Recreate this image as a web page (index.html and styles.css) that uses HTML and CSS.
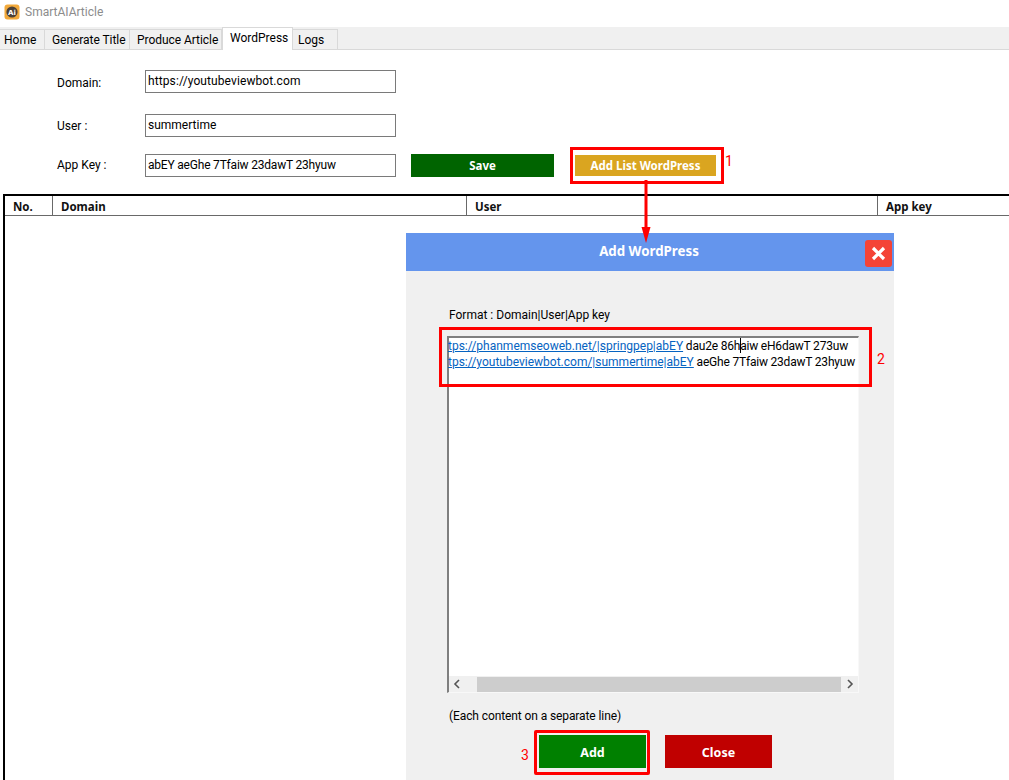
FILE: index.html
```html
<!DOCTYPE html>
<html lang="en">
<head>
<meta charset="utf-8">
<title>SmartAIArticle</title>
<link rel="stylesheet" href="styles.css">
</head>
<body>
<div class="app">
  <header class="titlebar">
    <svg class="logo" width="16" height="16" viewBox="0 0 16 16"><rect x="0.5" y="0.5" width="15" height="15" rx="3" fill="#f2a93b"/><circle cx="8" cy="8" r="5.6" fill="#4a4038"/><text x="8" y="10.5" text-anchor="middle" class="logo-text">Ai</text></svg>
    <span class="app-name">SmartAIArticle</span>
  </header>
  <nav class="tabs">
    <span class="tab t1">Home</span>
    <span class="tab t2">Generate Title</span>
    <span class="tab t3">Produce Article</span>
    <span class="tab active">WordPress</span>
    <span class="tab t5">Logs</span>
  </nav>
  <section class="form">
    <div class="row r1"><label class="lbl">Domain:</label><div class="field">https://youtubeviewbot.com</div></div>
    <div class="row r2"><label class="lbl">User :</label><div class="field">summertime</div></div>
    <div class="row r3"><label class="lbl">App Key :</label><div class="field">abEY aeGhe 7Tfaiw 23dawT 23hyuw</div>
      <button class="btn save">Save</button>
      <button class="btn gold">Add List WordPress</button>
    </div>
  </section>
  <section class="table">
    <div class="th c1">No.</div><div class="th c2">Domain</div><div class="th c3">User</div><div class="th c4">App key</div>
  </section>
</div>

<aside class="modal">
  <div class="modal-head"><span class="modal-title">Add WordPress</span>
    <span class="modal-close"><svg width="15" height="15" viewBox="0 0 15 15"><path d="M2 2 L13 13 M13 2 L2 13" stroke="#fff" stroke-width="3.2" fill="none"/></svg></span>
  </div>
  <div class="modal-body">
    <p class="format">Format : Domain|User|App key</p>
    <div class="textarea">
      <div class="lines">
        <div class="line"><a class="link">tps://phanmemseoweb.net/|springpep|abEY</a> dau2e 86h<span class="caret"></span>aiw eH6dawT 273uw</div>
        <div class="line"><a class="link">tps://youtubeviewbot.com/|summertime|abEY</a> aeGhe 7Tfaiw 23dawT 23hyuw</div>
      </div>
      <div class="hscroll">
        <svg class="arrow" width="8" height="10" viewBox="0 0 8 10"><path d="M6 1 L2 5 L6 9" fill="none" stroke="#555" stroke-width="1.6"/></svg>
        <div class="thumb"></div>
        <svg class="arrow" width="8" height="10" viewBox="0 0 8 10"><path d="M2 1 L6 5 L2 9" fill="none" stroke="#555" stroke-width="1.6"/></svg>
      </div>
    </div>
    <p class="note">(Each content on a separate line)</p>
    <div class="actions">
      <button class="btn add">Add</button>
      <button class="btn close">Close</button>
    </div>
  </div>
</aside>

<div class="mark m1"></div>
<div class="mark m2"></div>
<div class="mark m3"></div>
<span class="num n1">1</span>
<span class="num n2">2</span>
<span class="num n3">3</span>
<svg class="flow-arrow" width="14" height="64" viewBox="0 0 14 64"><path d="M7 0 V50" stroke="#f00" stroke-width="3"/><path d="M2.500 47 H11.500 L7 63 Z" fill="#f00"/></svg>
</body>
</html>
```
FILE: styles.css
```css
* { box-sizing: border-box; }
html, body { margin: 0; padding: 0; }
body { width: 1009px; height: 780px; overflow: hidden; position: relative; background: #fff; font-family: Roboto, "Noto Sans", sans-serif; font-size: 12px; color: #000; }
.app { display: flex; flex-direction: column; height: 780px; }

.titlebar { height: 27px; display: flex; align-items: center; gap: 5px; padding: 0 0 3px 4px; }
.logo-text { font: bold 7px "DejaVu Sans", sans-serif; fill: #fff; }
.app-name { color: #8c8c8c; font-size: 12px; }

.tabs { height: 23px; background: #f0f0f0; border-bottom: 1px solid #d9d9d9; display: flex; align-items: flex-end; white-space: nowrap; }
.tab { height: 21px; border: 1px solid #d9d9d9; border-bottom: 0; border-left: 0; line-height: 21px; padding-left: 4px; font-size: 12px; margin-bottom: -1px; }
.t1 { width: 45px; }
.t2 { width: 85px; padding-left: 7px; letter-spacing: -0.05px; }
.t3 { width: 92px; padding-left: 7px; letter-spacing: -0.05px; }
.active { width: 71px; height: 23px; background: #fff; border: 1px solid #d9d9d9; border-bottom: 0; line-height: 20px; padding-left: 7px; }
.t5 { width: 45px; padding-left: 5px; }

.form { padding: 20px 0 0 57px; display: flex; flex-direction: column; }
.row { display: flex; align-items: center; height: 23px; }
.r2 { margin-top: 21px; }
.r3 { margin-top: 17px; }
.lbl { width: 88px; font-size: 12px; position: relative; top: 1px; }
.r2 .lbl { top: 0; }
.r3 .lbl { top: -1px; }
.field { width: 251px; height: 23px; border: 1px solid #7a7a7a; padding-left: 2px; line-height: 20px; font-size: 12px; }
.r1 .field { letter-spacing: 0.1px; }
.r3 .field { letter-spacing: -0.2px; }

.btn { border: 0; padding: 0; color: #fff; font: bold 11.500px "Noto Sans", sans-serif; }
.save { width: 143px; height: 23px; margin-left: 15px; background: #006400; }
.gold { width: 141px; height: 21px; margin-left: 21px; background: #daa520; }

.table { margin: 17px 0 0 3px; height: 586px; border: 2px solid #000; border-width: 2px 0 0 2px; display: grid; grid-template-columns: 48px 414px 411px 1fr; grid-template-rows: 20px; }
.th { border-bottom: 1px solid #696969; border-right: 1px solid #696969; font: bold 11.500px/21px "Noto Sans", sans-serif; padding-left: 8px; color: #111; }
.c4 { border-right: 0; }

.modal { position: absolute; left: 406px; top: 233px; width: 488px; height: 547px; background: #f0f0f0; }
.modal-head { height: 38px; background: #6495ed; position: relative; display: flex; align-items: center; justify-content: center; padding: 0 2px 2px 0; }
.modal-title { color: #fff; font: bold 13.300px "Noto Sans", sans-serif; }
.modal-close { position: absolute; left: 459px; top: 7px; width: 27px; height: 27px; background: #f44336; border-radius: 3px; display: flex; align-items: center; justify-content: center; }
.modal-body { padding: 36px 0 0 41px; }
.format { margin: 0 0 12px 2px; font-size: 12px; line-height: 17px; }
.textarea { width: 412px; height: 357px; background: #fff; border: 1px solid #f8f8f8; border-top: 2px solid #7f7f7f; border-left: 2px solid #7f7f7f; display: flex; flex-direction: column; justify-content: space-between; }
.lines { line-height: 16px; white-space: nowrap; font-size: 12px; letter-spacing: -0.2px; overflow: hidden; margin-left: -1px; }
.link { color: #0563c1; text-decoration: underline; letter-spacing: 0; }
.caret { display: inline-block; width: 1px; height: 15px; background: #000; vertical-align: -3px; margin: 0 -1px 0 0; }
.hscroll { height: 16px; background: #f0f0f0; display: flex; align-items: center; justify-content: space-between; padding: 0 4px 0 4px; }
.thumb { width: 364px; height: 15px; background: #cdcdcd; margin: 0 0 0 10px; }
.note { margin: 15px 0 0 2px; font-size: 12px; line-height: 17px; letter-spacing: -0.1px; }
.actions { display: flex; gap: 19px; margin: 10px 0 0 92px; }
.add { width: 107px; height: 33px; background: #008000; font-size: 12.500px; padding-top: 2px; }
.close { width: 107px; height: 33px; background: #c00000; font-size: 12.500px; padding-top: 2px; }

.mark { position: absolute; border: 3px solid #f00; }
.m1 { left: 570px; top: 147px; width: 154px; height: 37px; }
.m2 { left: 439px; top: 327px; width: 433px; height: 60px; }
.m3 { left: 534px; top: 730px; width: 116px; height: 45px; border-radius: 2px; }
.num { position: absolute; color: #f00; font-size: 14px; line-height: 16px; }
.n1 { left: 725px; top: 153px; }
.n2 { left: 877px; top: 351px; }
.n3 { left: 521px; top: 747px; }
.flow-arrow { position: absolute; left: 639px; top: 180px; }
```
